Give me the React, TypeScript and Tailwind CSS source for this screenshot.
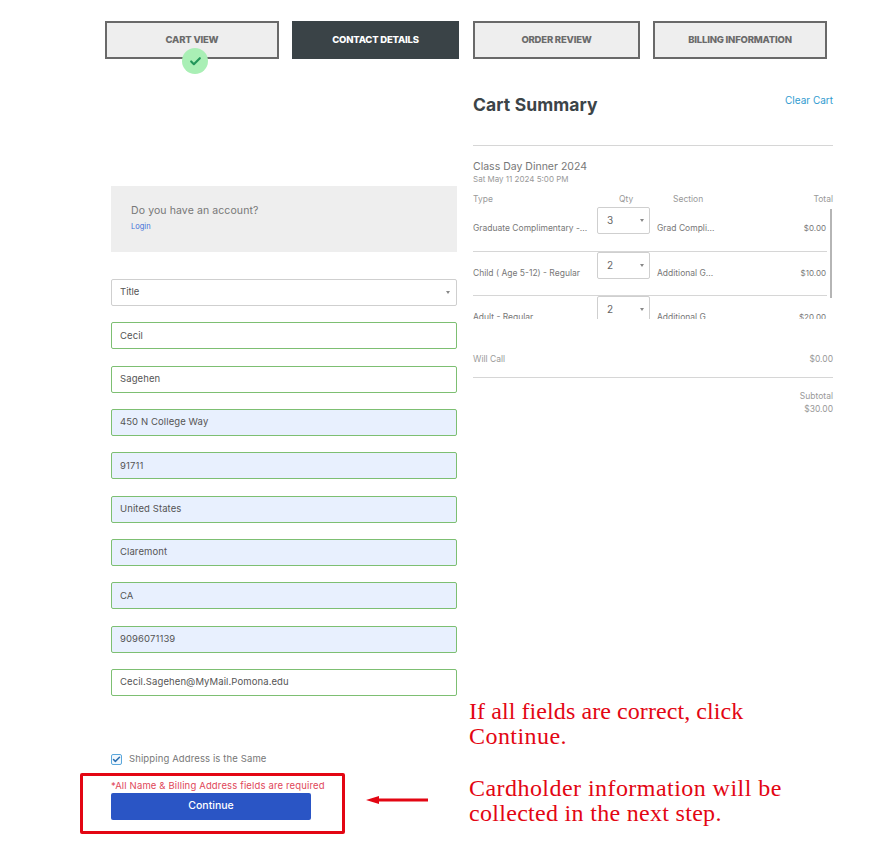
import { Check } from "lucide-react";

const fields = [
  { value: "Cecil", filled: false },
  { value: "Sagehen", filled: false },
  { value: "450 N College Way", filled: true },
  { value: "91711", filled: true },
  { value: "United States", filled: true },
  { value: "Claremont", filled: true },
  { value: "CA", filled: true },
  { value: "9096071139", filled: true },
  { value: "Cecil.Sagehen@MyMail.Pomona.edu", filled: false },
];

const rows = [
  { type: "Graduate Complimentary -...", qty: "3", section: "Grad Compli...", total: "$0.00" },
  { type: "Child ( Age 5-12) - Regular", qty: "2", section: "Additional G...", total: "$10.00" },
  { type: "Adult - Regular", qty: "2", section: "Additional G...", total: "$20.00" },
];

function Caret() {
  return <span className="h-0 w-0 border-x-[2.5px] border-t-[3px] border-x-transparent border-t-[#888]" />;
}

function Step({ label, width, active }: { label: string; width: string; active?: boolean }) {
  return (
    <div
      className={`flex h-[38px] items-center justify-center text-[9.5px] font-extrabold tracking-[-0.2px] ${width} ${
        active ? "bg-[#3a4347] text-white" : "border-2 border-[#696969] bg-[#eeeeee] text-[#6b6b6b]"
      }`}
    >
      {label}
    </div>
  );
}

export default function App() {
  return (
    <div className="relative h-[851px] w-[880px] overflow-hidden bg-white font-['Inter',sans-serif] text-[#555]">
      <div className="relative flex gap-[13px] pl-[105px] pt-[21px]">
        <Step label="CART VIEW" width="w-[174px]" />
        <Step label="CONTACT DETAILS" width="w-[167px]" active />
        <Step label="ORDER REVIEW" width="ml-px w-[167px]" />
        <Step label="BILLING INFORMATION" width="w-[174px]" />
        <div className="absolute left-[182px] top-[48px] flex h-[26px] w-[26px] items-center justify-center rounded-full bg-[#a9efb5]">
          <Check className="h-[13px] w-[13px] text-[#22965a]" strokeWidth={4} />
        </div>
      </div>

      <div className="flex pl-[111px]">
        <div className="w-[346px] pt-[127px]">
          <div className="h-[66px] bg-[#eeeeee] pl-5 pt-[18px]">
            <p className="text-[10.5px] leading-[14px] tracking-[0.1px] text-[#777]">Do you have an account?</p>
            <p className="mt-[3px] text-[7.5px] leading-[12px] text-[#3f6fd8]">Login</p>
          </div>

          <div className="mt-[27px] flex h-[27px] items-center justify-between rounded-[2px] border border-[#cfcfcf] pl-2 pr-[6px] text-[9.5px] text-[#555]">
            <span>Title</span>
            <Caret />
          </div>

          <div className="mt-[16.3px] flex flex-col gap-[16.35px]">
            {fields.map((f) => (
              <div
                key={f.value}
                className={`flex h-[27px] items-center rounded-[2px] border border-[#7dbf72] pl-2 text-[9.5px] tracking-[0.1px] text-[#555] ${
                  f.filled ? "bg-[#e8f0fe]" : "bg-white"
                }`}
              >
                {f.value}
              </div>
            ))}
          </div>

          <div className="mt-[56px] flex h-[14px] items-center gap-[7px]">
            <span className="flex h-[11px] w-[11px] items-center justify-center rounded-[2px] border border-[#5aa7dc] bg-[#f2f8fd]">
              <Check className="h-[9px] w-[9px] text-[#2c6fb0]" strokeWidth={4} />
            </span>
            <span className="text-[9.5px] tracking-[0.12px] text-[#777]">Shipping Address is the Same</span>
          </div>

          <p className="mt-[13px] text-[9.5px] leading-[14px] tracking-[0.15px] text-[#e0475a]">
            *All Name &amp; Billing Address fields are required
          </p>
          <div className="flex h-[27px] w-[200px] items-center justify-center rounded-[2px] bg-[#2a55c5] pb-px text-[10.5px] font-medium text-white">
            Continue
          </div>
        </div>

        <div className="ml-4 w-[360px] pt-[35px]">
          <div className="flex items-start justify-between">
            <h2 className="text-[17.5px] font-bold leading-[22px] tracking-[0.1px] text-[#3c4448]">Cart Summary</h2>
            <a className="text-[10px] leading-[12px] text-[#2f9bd0]">Clear Cart</a>
          </div>
          <div className="mt-[29px] border-t border-[#d6d6d6]" />

          <p className="mt-[14px] text-[10.5px] leading-[13px] text-[#777]">Class Day Dinner 2024</p>
          <p className="text-[8px] leading-[13px] text-[#999]">Sat May 11 2024 5:00 PM</p>

          <div className="mt-[6px] flex h-[14px] items-center text-[8.5px] text-[#999]">
            <span className="w-[124px]">Type</span>
            <span className="w-[59px] pl-[22px]">Qty</span>
            <span className="pl-[17px]">Section</span>
            <span className="ml-auto">Total</span>
          </div>

          <div className="relative mt-px h-[112px] overflow-hidden">
            {rows.map((r) => (
              <div key={r.type} className="flex h-[44.5px] w-[354px] items-start border-b border-[#d6d6d6] text-[8.5px] text-[#777]">
                <span className="mt-[15px] w-[124px] truncate leading-[12px]">{r.type}</span>
                <div className="flex h-[27px] w-[53px] items-center justify-between rounded-[2px] border border-[#cfcfcf] bg-white pl-[9px] pr-[5px] text-[10px] text-[#666]">
                  {r.qty}
                  <Caret />
                </div>
                <span className="ml-[7px] mt-[15px] leading-[12px]">{r.section}</span>
                <span className="ml-auto mt-[15px] pr-[1px] text-[8px] leading-[12px]">{r.total}</span>
              </div>
            ))}
            <div className="absolute right-[1px] top-[2px] h-[89px] w-[2px] bg-[#b5b5b5]" />
          </div>

          <div className="mt-[33px] flex items-center justify-between text-[8.5px] leading-[14px] text-[#999]">
            <span>Will Call</span>
            <span>$0.00</span>
          </div>
          <div className="mt-[11px] border-t border-[#d6d6d6]" />
          <div className="mt-[12px] text-right text-[8.5px] leading-[13px] text-[#999]">
            <p>Subtotal</p>
            <p>$30.00</p>
          </div>
        </div>
      </div>

      {/* annotations laid over the screenshot */}
      <div className="absolute left-[80px] top-[773px] h-[61px] w-[265px] rounded-[2px] border-[3px] border-[#e30613]" />
      <svg className="absolute left-[365px] top-[794px]" width="64" height="12" viewBox="0 0 64 12">
        <path d="M1 6 L14 2 L14 4.5 L63 4.5 L63 7.5 L14 7.5 L14 10 Z" fill="#e30613" />
      </svg>
      <div className="absolute left-[469px] top-[699px] w-[360px] font-['Liberation_Serif',serif] text-[24px] leading-[25px] tracking-[0.45px] text-[#e30613]">
        <p className="tracking-[0.08px]">If all fields are correct, click</p>
        <p>Continue.</p>
        <p className="mt-[27px]">Cardholder information will be</p>
        <p className="tracking-[0.3px]">collected in the next step.</p>
      </div>
    </div>
  );
}
